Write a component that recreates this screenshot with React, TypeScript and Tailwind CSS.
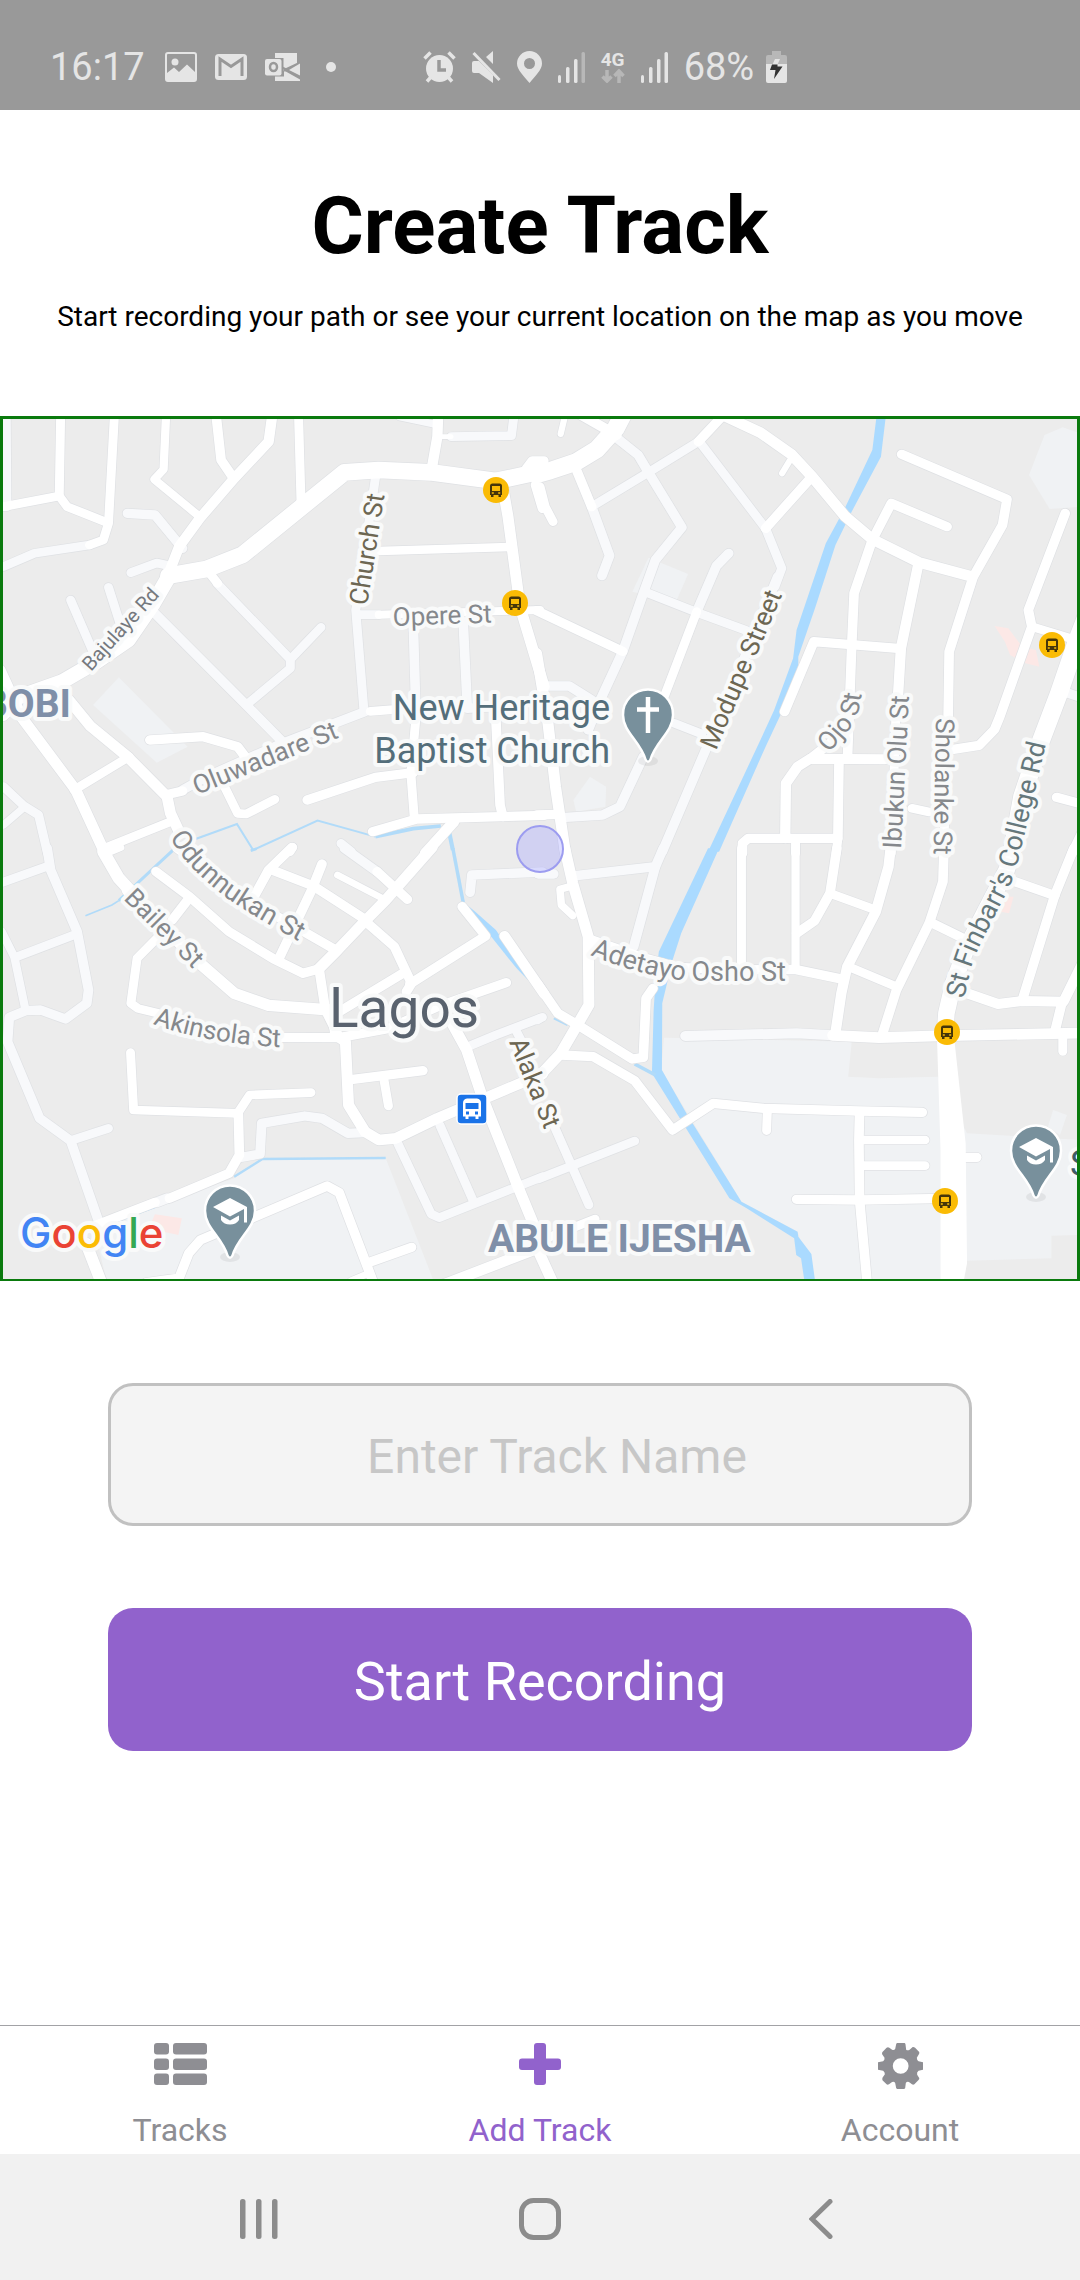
import { Fragment } from "react";
import type { ReactNode } from "react";

type Road = [kind: "w" | "m", width: number, d: string];
type Water = [width: number, d: string];

interface Sheet {
  x: number;
  y: number;
  areas: string[];
  pink: string[];
  rivers: string[];
  streams: Water[];
  roads: Road[];
  blocks: string[];
}

// Each sheet covers a 540 x 440 part of the map, drawn in 1568 x 1320 units.
const SHEETS: Sheet[] = [
  {
    x: 0,
    y: 410,
    areas: ["M345 802L545 1010L455 1058L270 885Z"],
    pink: [],
    rivers: [],
    streams: [
      [6, "M510 1320L560 1290L688 1242L735 1320L922 1232L1090 1280"],
      [11, "M1090 1280L1200 1256L1280 1248"],
      [12, "M1303 1260L1315 1320"],
    ],
    blocks: [],
    roads: [
      ["m", 26, "M18 20L20 290"],
      ["m", 26, "M10 470L100 430L260 405"],
      ["m", 26, "M1310 80L1485 77L1492 20"],
      ["m", 22, "M1160 20L1260 42"],
      ["m", 26, "M1092 190L1065 380L1033 600L1057 905"],
      ["m", 26, "M1040 614L1100 614"],
      ["m", 28, "M370 310L450 315L530 415"],
      ["m", 26, "M380 488L455 459L495 468"],
      ["m", 26, "M205 570L270 725"],
      ["m", 26, "M315 532L350 645"],
      ["m", 26, "M630 520L843 748L843 775L715 885"],
      ["m", 26, "M843 748L932 652"],
      ["m", 28, "M435 595L715 885L820 995"],
      ["m", 28, "M1200 640L1208 920"],
      ["m", 28, "M1345 635L1357 895L1430 890"],
      ["m", 28, "M1060 905L820 1000L600 1100L530 1140"],
      ["m", 26, "M10 1130L70 1188L112 1215L138 1330"],
      ["m", 22, "M10 1245L70 1192"],
      ["m", 26, "M990 1300L1020 1325"],
      ["w", 26, "M260 405L300 390L315 340L332 20"],
      ["w", 26, "M10 290L172 258L176 20"],
      ["w", 26, "M172 258L195 290L305 335"],
      ["w", 24, "M482 20L475 178L448 208L582 322"],
      ["w", 28, "M628 20L642 150L675 200"],
      ["w", 30, "M790 20L780 95L680 205L580 325L520 410L490 490"],
      ["w", 26, "M867 20L874 275"],
      ["w", 50, "M490 497L600 477L705 434L1000 187L1100 180L1250 187L1440 213L1580 182"],
      ["w", 30, "M1272 20L1270 80L1253 180"],
      ["w", 14, "M1280 80L1310 80"],
      ["w", 26, "M1100 423L1480 411"],
      ["w", 44, "M490 500L445 580L372 690L280 755L180 815L30 870"],
      ["w", 26, "M605 485L632 520"],
      ["w", 24, "M1100 614L1568 600"],
      ["w", 32, "M1458 220L1475 320L1510 590L1580 830"],
      ["w", 26, "M1075 904L1150 898"],
      ["w", 26, "M1208 920L1193 1090L1203 1225"],
      ["w", 28, "M1440 930L1452 1185L1460 1220"],
      ["w", 28, "M1580 1216L1210 1227L1082 1265"],
      ["w", 28, "M892 1170L1090 1102L1200 1088"],
      ["w", 28, "M435 990L590 980L690 1010L730 1065"],
      ["w", 26, "M640 1105L690 1210L715 1212L798 1168"],
      ["w", 32, "M200 870L262 948L370 1040L485 1160L495 1210L520 1265"],
      ["w", 28, "M480 1155L530 1143"],
      ["w", 26, "M375 1040L215 1140"],
      ["w", 32, "M0 780L40 870L65 925L220 1140L305 1330"],
      ["w", 26, "M310 1312L495 1235"],
      ["w", 26, "M10 920L50 880"],
      ["w", 26, "M1528 175L1545 152L1580 152"],
      ["w", 28, "M1555 225L1575 295"],
      ["w", 32, "M1318 1235L1235 1330"],
      ["w", 26, "M850 1312L842 1325"],
    ],
  },
  {
    x: 540,
    y: 410,
    areas: [
      "M1518 52L1568 70V290L1480 297L1420 195L1465 75Z",
      "M315 443L430 492L395 575L268 545Z",
      "M145 1100L192 1130L190 1190L105 1205L97 1170Z",
    ],
    pink: ["M1320 648L1360 655L1400 710L1440 720L1450 770L1410 760L1365 735L1350 695Z"],
    rivers: [
      "M977 20L965 120L885 295L830 400L745 660L735 745L680 900L640 990L488 1325H520L655 1010L705 900L750 775V740L800 590L858 405L905 305L990 140L1004 20Z",
    ],
    streams: [],
    blocks: [],
    roads: [
      ["m", 28, "M228 88L285 135L315 187L412 352L335 450L300 550L240 725L175 870L140 960"],
      ["m", 26, "M150 290L315 187L460 95"],
      ["m", 28, "M150 290L202 437L180 497"],
      ["m", 26, "M468 102L655 355L702 475L682 530"],
      ["m", 28, "M690 500L595 740L485 1010L355 1325"],
      ["m", 28, "M548 430L512 468L455 605"],
      ["m", 26, "M315 550L455 607L600 662"],
      ["m", 26, "M390 940L470 972"],
      ["m", 28, "M20 828L85 828L150 870"],
      ["m", 28, "M300 1040L232 1190L182 1215L75 1222"],
      ["m", 28, "M1535 850L1575 864"],
      ["w", 52, "M-12 194L30 182L105 156L165 118L220 55L245 5"],
      ["w", 30, "M120 15L222 75"],
      ["w", 18, "M72 20L60 72"],
      ["w", 28, "M460 95L528 20"],
      ["w", 28, "M108 185L150 290"],
      ["w", 32, "M530 15L640 68L730 133L790 200L885 318L965 388L1100 457L1255 500"],
      ["w", 18, "M725 152L703 190"],
      ["w", 28, "M655 355L785 205"],
      ["w", 26, "M0 230L15 290L38 335"],
      ["w", 26, "M455 605L355 875"],
      ["w", 28, "M-10 602L240 724"],
      ["w", 32, "M-10 730L22 930L45 1130L74 1330"],
      ["w", 28, "M-10 1215L50 1213"],
      ["w", 28, "M1050 133L1356 268L1343 345L1258 500L1188 725L1185 930"],
      ["w", 28, "M1182 350L1020 280L965 390L912 550L905 710L900 850L893 1040"],
      ["w", 30, "M1098 465L1048 715L1040 850"],
      ["w", 28, "M710 905L795 695L1048 716"],
      ["w", 28, "M1525 310L1418 600L1428 650L1335 920L1320 958L1275 1006L1200 1018"],
      ["w", 26, "M1428 650L1540 685"],
      ["w", 52, "M1590 610L1560 690L1507 850L1452 1000L1400 1160L1370 1330"],
      ["w", 28, "M1500 1162L1580 1184"],
      ["w", 28, "M1580 1255L1545 1330"],
      ["w", 30, "M1000 1048L785 1046L748 1070L714 1120L712 1285"],
      ["w", 28, "M860 985L785 1046"],
      ["w", 28, "M868 1060L865 1285L605 1285L588 1300V1330"],
      ["w", 26, "M865 1285L860 1330"],
      ["w", 26, "M742 1285V1330"],
      ["w", 26, "M1080 1195L1130 1206"],
      ["w", 26, "M1035 870L1020 1330"],
      ["w", 26, "M1183 940L1172 1330"],
    ],
  },
  {
    x: 0,
    y: 850,
    areas: ["M760 925H1120L1260 1295H310L270 1120L440 1070L680 985Z"],
    pink: ["M450 1093L528 1105L518 1155L475 1145L440 1115Z"],
    rivers: ["M1345 155L1380 185L1440 240L1500 330L1575 435L1500 355L1430 265Z"],
    streams: [
      [9, "M508 -5L440 60L345 152"],
      [5, "M345 152L325 165L248 197"],
      [7, "M680 980L762 927L1120 924"],
      [6, "M300 1130L415 1085L520 1045"],
      [10, "M1315 -5L1345 157"],
      [8, "M728 2L745 -4"],
    ],
    blocks: [],
    roads: [
      ["m", 28, "M137 -5L147 60L224 245L257 420L252 460L190 507L118 480L75 482L27 502L22 575L115 805L205 872L290 1125"],
      ["m", 26, "M5 98L140 48"],
      ["m", 26, "M45 322L220 253"],
      ["m", 24, "M5 245L42 322L74 480"],
      ["m", 26, "M205 872L315 835"],
      ["m", 26, "M1365 587L1440 555L1575 502"],
      ["m", 26, "M1500 545L1515 575"],
      ["m", 28, "M1000 -5L1095 65"],
      ["m", 28, "M1365 127L1370 75L1575 66"],
      ["m", 30, "M485 1045L455 1057"],
      ["m", 28, "M700 922L755 912L760 820L885 798L935 805L1010 850L1055 848"],
      ["m", 26, "M1155 880L1252 1092L1275 1103L1575 980"],
      ["m", 26, "M1277 825L1375 1055"],
      ["w", 36, "M300 5L345 85L385 130"],
      ["w", 22, "M320 5L350 -8"],
      ["w", 34, "M370 120L580 340L680 430L780 466L960 480"],
      ["w", 28, "M453 65L550 140L665 245L795 327L880 370L925 357"],
      ["w", 28, "M545 150L500 210"],
      ["w", 26, "M465 255L398 325L380 460L400 475L460 490"],
      ["w", 32, "M925 357L980 300L1060 213L1120 150L1255 -8"],
      ["w", 28, "M927 360L945 480L985 562"],
      ["w", 32, "M965 480L975 555L1003 575L1012 765L1060 845L1100 870L1150 865L1270 805L1575 672"],
      ["w", 28, "M740 562L985 563L1130 535L1270 470L1470 398"],
      ["w", 28, "M985 485L1170 370"],
      ["w", 28, "M1060 213L1145 290L1195 400L1180 425"],
      ["w", 28, "M1190 402L1410 258L1342 170"],
      ["w", 32, "M1310 515L1355 600L1400 740L1500 1000L1580 1200"],
      ["w", 28, "M515 -5L720 150L865 235L975 300"],
      ["w", 28, "M848 -8L780 60L735 145"],
      ["w", 28, "M785 58L910 108L1060 208"],
      ["w", 28, "M935 42L905 120L808 330"],
      ["w", 28, "M1095 65L1183 148"],
      ["w", 20, "M980 75L1105 142"],
      ["w", 30, "M1465 258L1580 432"],
      ["w", 26, "M379 608L388 780L690 790L725 735L903 728"],
      ["w", 28, "M692 790L695 915L665 970L492 1045"],
      ["w", 28, "M450 1057L280 1125"],
      ["w", 28, "M1025 688L1228 662"],
      ["w", 26, "M1115 690L1128 768"],
      ["w", 34, "M250 1180L295 1300"],
      ["w", 28, "M425 1298L520 1284L548 1210L582 1170L950 1008L985 1028L1085 1300"],
      ["w", 28, "M1070 1238L1195 1192"],
      ["w", 20, "M1020 1292L1075 1268"],
      ["w", 32, "M1285 1305L1575 1190"],
    ],
  },
  {
    x: 540,
    y: 850,
    areas: [
      "M360 563L905 575L895 680L985 685L1155 680L1240 850L1568 870V1155L1485 1157V1225L1240 1232L1165 1295H798L748 1145L585 1055L352 660Z",
      "M1490 780L1530 795L1510 855L1475 830Z",
    ],
    pink: ["M1348 140L1375 140L1362 190L1338 185Z"],
    rivers: [
      "M488 -5L345 305L335 400L330 480L325 670L550 1045L600 1075L738 1165L744 1215L758 1225L768 1295H799L788 1212L750 1160L748 1145L585 1055L425 790L354 660L355 460L385 330L410 250L520 -5Z",
    ],
    streams: [
      [11, "M275 642L335 675"],
      [6, "M40 505L80 525"],
    ],
    blocks: ["M1152 540L1200 540L1236 880L1240 1240L1230 1295H1163V900Z"],
    roads: [
      ["m", 28, "M-5 72H40"],
      ["m", 28, "M95 78L335 50"],
      ["m", 28, "M358 -5L335 50L272 290"],
      ["m", 30, "M422 558L745 550L850 556"],
      ["m", 26, "M25 790L142 1065"],
      ["m", 26, "M-5 987L275 873"],
      ["m", 26, "M-8 510L0 505"],
      ["w", 32, "M72 -5L95 100L140 260L142 465L60 610L-8 685"],
      ["w", 22, "M85 110L58 118L62 165L95 197"],
      ["w", 28, "M-8 400L52 490L110 525L268 627L300 622L308 445L328 415"],
      ["w", 28, "M60 615L155 620L275 692L385 840L503 760L650 775L925 783L1110 787"],
      ["w", 26, "M30 1160L160 1107"],
      ["w", 32, "M-15 1180L38 1300"],
      ["w", 26, "M585 -5L585 345"],
      ["w", 24, "M742 -5V350"],
      ["w", 28, "M150 270L290 320L400 352L570 360L740 358L880 388"],
      ["w", 28, "M862 -5L842 130L797 213L745 250"],
      ["w", 26, "M842 130L970 178"],
      ["w", 30, "M1018 -5L1012 50L975 185L892 350L875 430L857 555"],
      ["w", 26, "M900 352L1035 410"],
      ["w", 32, "M850 556L985 563L1180 557L1580 549"],
      ["w", 28, "M1173 -5L1170 95L1130 220L1035 420L992 560"],
      ["w", 28, "M1140 220L1235 268"],
      ["w", 48, "M1375 -5L1355 60L1240 290L1200 400L1180 490L1176 550"],
      ["w", 28, "M1365 90L1495 137"],
      ["w", 28, "M1550 -5L1495 135L1402 445"],
      ["w", 30, "M1240 430L1330 462L1400 453L1520 455L1580 330"],
      ["w", 28, "M1515 460L1495 545"],
      ["w", 26, "M1518 560L1518 604"],
      ["w", 28, "M928 785L926 870L928 1050L950 1300"],
      ["w", 26, "M930 870H1118"],
      ["w", 26, "M930 947H1118"],
      ["w", 28, "M745 1048L928 1050L1175 1045"],
      ["w", 26, "M660 785L658 842"],
      ["w", 28, "M1220 922H1268"],
    ],
  },
];

function SheetLayer({ draw }: { draw: (s: Sheet) => ReactNode }) {
  return (
    <>
      {SHEETS.map((s, i) => (
        <g key={i} transform={`translate(${s.x} ${s.y}) scale(0.34439 0.33333)`}>
          {draw(s)}
        </g>
      ))}
    </>
  );
}

function BusStop({ x, y }: { x: number; y: number }) {
  return (
    <g transform={`translate(${x} ${y})`}>
      <circle r="13" fill="#fabb05" />
      <path
        fillRule="evenodd"
        fill="#45350a"
        d="M-3.500-6.500H3.500Q6-6.500 6-4V5H5V7H2.500V5H-2.500V7H-5V5H-6V-4Q-6-6.500-3.500-6.500ZM-4-4V1H4V-4ZM-4.200 2.200V3.800H-2.200V2.200ZM2.200 2.200V3.800H4.200V2.200Z"
      />
    </g>
  );
}

function Pin({ x, y, children }: { x: number; y: number; children: ReactNode }) {
  return (
    <g transform={`translate(${x} ${y})`}>
      <ellipse cy="46" rx="10" ry="5" fill="#000" opacity="0.06" />
      <path
        d="M0-25.500A25 25 0 0 1 25 0C25 17 8 26 2.500 44.500Q0 49-2.500 44.500C-8 26-25 17-25 0A25 25 0 0 1 0-25.500Z"
        fill="#78909c"
        stroke="#fff"
        strokeWidth="2.500"
      />
      {children}
    </g>
  );
}

function SchoolPin({ x, y }: { x: number; y: number }) {
  return (
    <Pin x={x} y={y}>
      <path
        fill="#fff"
        d="M0-13L17-4V11.500H14V-2L0 5.500L-17-4ZM-9 4.500L0 9.500L9 4.500V9Q6 13.500 0 13.500T-9 9Z"
      />
    </Pin>
  );
}

const STRAIGHT: [text: string, x: number, y: number, angle: number, size: string, color: string][] = [
  ["Church St", 367, 606, -81, "text-[26px]", "#6d6753"],
  ["Opere St", 393, 626, -2, "text-[26px]", "#85888c"],
  ["Bajulaye Rd", 91, 672, -48, "text-[20px]", "#75797e"],
  ["Oluwadare St", 197, 795, -22, "text-[26px]", "#85888c"],
  ["Modupe Street", 716, 751, -67, "text-[26px]", "#6d6753"],
  ["Ibukun Olu St", 901, 849, -87, "text-[26px]", "#85888c"],
  ["Sholanke St", 936, 718, 91, "text-[26px]", "#85888c"],
  ["Bailey St", 123, 899, 45, "text-[26px]", "#85888c"],
  ["Alaka St", 509, 1042, 68, "text-[26px]", "#6d6753"],
];

const CURVED: [id: string, text: string, d: string, size: string, color: string][] = [
  ["ojo", "Ojo St", "M829 753L848 731Q860 717 862 690L864 650", "text-[26px]", "#85888c"],
  [
    "finbarr",
    "St Finbarr's College Rd",
    "M964 999L970 973Q973 958 985 935L1008 890Q1016 873 1022 845L1036 787L1052 718",
    "text-[27px]",
    "#65777b",
  ],
  ["odunnukan", "Odunnukan St", "M170 837Q183 864 224 896Q255 918 315 950", "text-[27px]", "#85888c"],
  ["akinsola", "Akinsola St", "M153 1024Q215 1047 310 1048", "text-[26px]", "#85888c"],
  ["adetayo", "Adetayo Osho St", "M590 955Q640 976 690 981H830", "text-[27px]", "#85888c"],
];

function CurvedLabels() {
  return (
    <>
      {CURVED.map(([id, t, d, size, color]) => (
        <Fragment key={id}>
          <path id={id} d={d} fill="none" stroke="none" />
          <text className={size} aria-hidden="true">
            <textPath href={`#${id}`} fill="#f9fafa">
              {t}
            </textPath>
          </text>
          <text className={size} fill={color} stroke="none">
            <textPath href={`#${id}`}>{t}</textPath>
          </text>
        </Fragment>
      ))}
    </>
  );
}

function TrackMap() {
  return (
    <div className="border-[3px] border-b-2 border-[#0a7a0d]">
      <svg
        viewBox="3 419 1074 860"
        className="block h-auto w-full bg-[#ececec] font-['Roboto',sans-serif]"
        role="img"
        aria-label="Map of Lagos around New Heritage Baptist Church"
      >
        <SheetLayer
          draw={(s) => (
            <>
              {s.areas.map((d) => (
                <path key={d} d={d} fill="#f0f2f4" />
              ))}
              {s.pink.map((d) => (
                <path key={d} d={d} fill="#fce8e6" />
              ))}
            </>
          )}
        />
        <SheetLayer
          draw={(s) => (
            <>
              {s.rivers.map((d) => (
                <path key={d} d={d} fill="#aadaff" />
              ))}
              {s.streams.map(([w, d]) => (
                <path key={d} d={d} fill="none" stroke="#b1dbf9" strokeWidth={w} />
              ))}
            </>
          )}
        />
        <g fill="none" strokeLinecap="round" strokeLinejoin="round" stroke="#dfe1e4">
          <SheetLayer
            draw={(s) => s.roads.map(([, w, d]) => <path key={d} d={d} strokeWidth={w + 4} />)}
          />
        </g>
        <g fill="none" strokeLinecap="round" strokeLinejoin="round" stroke="#f8f9fb">
          <SheetLayer
            draw={(s) =>
              s.roads.filter((r) => r[0] === "m").map(([, w, d]) => <path key={d} d={d} strokeWidth={w} />)
            }
          />
        </g>
        <g fill="none" strokeLinecap="round" strokeLinejoin="round" stroke="#fff">
          <SheetLayer
            draw={(s) => (
              <>
                {s.blocks.map((d) => (
                  <path key={d} d={d} fill="#fff" stroke="none" />
                ))}
                {s.roads.filter((r) => r[0] === "w").map(([, w, d]) => (
                  <path key={d} d={d} strokeWidth={w} />
                ))}
              </>
            )}
          />
        </g>

        <circle cx="540" cy="849" r="23" fill="#a0a0ff" fillOpacity="0.35" stroke="#9c9cf0" strokeWidth="2" />

        <g stroke="#f9fafa" strokeWidth="8" strokeLinejoin="round" paintOrder="stroke">
          {STRAIGHT.map(([t, x, y, a, size, color]) => (
            <text key={t} transform={`translate(${x} ${y}) rotate(${a})`} className={size} fill={color}>
              {t}
            </text>
          ))}
          <CurvedLabels />
          <text x="610" y="720" textAnchor="end" className="text-[36px]" fill="#546e7a">
            New Heritage
          </text>
          <text x="610" y="763" textAnchor="end" className="text-[36px]" fill="#546e7a">
            Baptist Church
          </text>
          <text x="71" y="717" textAnchor="end" className="text-[39px] font-bold" fill="#7f8fa8">
            BOBI
          </text>
          <text x="488" y="1252" className="text-[39px] font-bold" fill="#7f8fa8">
            ABULE IJESHA
          </text>
          <text x="329" y="1027" className="text-[55px]" fill="#59626e">
            Lagos
          </text>
          <text x="1070" y="1176" className="text-[36px]" fill="#3f5c66">
            S
          </text>
          <text x="20" y="1248" className="font-['Inter',sans-serif] text-[42px] font-medium">
            <tspan fill="#4285f4">G</tspan>
            <tspan fill="#ea4335">o</tspan>
            <tspan fill="#fbbc05">o</tspan>
            <tspan fill="#4285f4">g</tspan>
            <tspan fill="#34a853">l</tspan>
            <tspan fill="#ea4335">e</tspan>
          </text>
        </g>

        <BusStop x={496} y={490} />
        <BusStop x={515} y={603} />
        <BusStop x={1052} y={645} />
        <BusStop x={947} y={1032} />
        <BusStop x={945} y={1201} />

        <g transform="translate(472 1109)">
          <rect x="-15" y="-15" width="30" height="30" rx="4" fill="#1a73e8" stroke="#fff" strokeWidth="1.500" />
          <path
            fillRule="evenodd"
            fill="#fff"
            d="M-5-10.500H5Q9-10 9-6V7.500H6.500V10H3.500V7.500H-3.500V10H-6.500V7.500H-9V-6Q-9-10-5-10.500ZM-6.500-6V0H6.500V-6ZM-6 2.500V5.500H-3V2.500ZM3 2.500V5.500H6V2.500Z"
          />
        </g>

        <Pin x={648} y={715}>
          <path d="M0-18V18M-11-5.500H11" stroke="#fff" strokeWidth="4.500" />
        </Pin>
        <SchoolPin x={230} y={1211} />
        <SchoolPin x={1036} y={1151} />
      </svg>
    </div>
  );
}

function Signal({ weak = false }: { weak?: boolean }) {
  return (
    <svg viewBox="0 0 27 31" className="h-[31px] w-[27px] fill-current" aria-hidden="true">
      <rect y="23" width="3" height="8" rx="1.500" />
      <rect x="8" y="15" width="3.500" height="16" rx="1.500" />
      <rect x="16" y="7" width="3.500" height="24" rx="1.500" />
      <rect x="23.500" width="3.500" height="31" rx="1.500" opacity={weak ? 0.4 : 1} />
    </svg>
  );
}

function StatusBar() {
  return (
    <header className="flex h-[110px] items-center bg-[#999] pt-6 pl-[50px] text-[38px] leading-none text-[#e5e5e5]">
      <div className="flex items-center gap-[18px]">
        <time className="mr-0.5">16:17</time>
        <svg viewBox="0 0 32 30" className="h-[30px] w-8" aria-hidden="true">
          <rect x="1" y="1" width="30" height="28" rx="2" fill="none" stroke="currentColor" strokeWidth="2" />
          <circle cx="10" cy="10" r="3.500" fill="currentColor" />
          <path d="M2 21L9 15.500L14 20L22 12.500L30 20V28H2Z" fill="currentColor" />
        </svg>
        <svg viewBox="0 0 32 26" className="h-[26px] w-8" aria-hidden="true">
          <rect width="32" height="26" rx="3.500" fill="currentColor" />
          <path d="M5 22V5L16 12.500L27 5V22" fill="none" stroke="#999" strokeWidth="3" />
        </svg>
        <svg viewBox="0 0 35 28" className="h-7 w-[35px]" aria-hidden="true">
          <path d="M10 0H32V13L18.500 17.500V5H10ZM19 17.500L35 26.500V28H10V23.500H19Z" fill="currentColor" />
          <path d="M17 14.500L35 23.500M19 17.500L35 10" stroke="#999" strokeWidth="2.500" />
          <path d="M35 10.500V22.500L24 17Z" fill="currentColor" />
          <rect y="6" width="16.500" height="16.500" rx="2" fill="currentColor" />
          <ellipse cx="8.500" cy="14" rx="3.500" ry="4" fill="none" stroke="#999" strokeWidth="2.500" />
        </svg>
        <span className="ml-2 size-[10px] rounded-full bg-current" />
      </div>
      <div className="ml-[87px] flex items-center gap-4">
        <svg viewBox="0 0 33 32" className="h-8 w-[33px]" aria-hidden="true">
          <circle cx="16.500" cy="17.500" r="13.500" fill="currentColor" />
          <path
            d="M1.500 7.500L7.500 1.500M31.500 7.500L25.500 1.500M4 30.500L8 26M29 30.500L25 26"
            stroke="currentColor"
            strokeWidth="3.500"
          />
          <path d="M16 9V19H23" fill="none" stroke="#999" strokeWidth="3.500" />
        </svg>
        <svg viewBox="0 0 29 32" className="h-8 w-[29px]" aria-hidden="true">
          <path d="M21 0V13L14 6ZM0 12Q0 10 2 10H7L21 24V32L7 22H2Q0 22 0 20Z" fill="currentColor" />
          <path d="M3 0L29 27" stroke="#999" strokeWidth="3" />
          <path d="M1.500 2L27.500 29" stroke="currentColor" strokeWidth="3" />
        </svg>
        <svg viewBox="0 0 25 32" className="h-8 w-[25px] fill-current" aria-hidden="true">
          <path
            fillRule="evenodd"
            d="M12.500 0A12.500 12.500 0 0 1 25 12.500C25 19 18 25 12.500 32C7 25 0 19 0 12.500A12.500 12.500 0 0 1 12.500 0ZM12.500 7A5.500 5.500 0 1 0 12.500 18A5.500 5.500 0 1 0 12.500 7Z"
          />
        </svg>
        <Signal weak />
        <div className="flex flex-col items-center">
          <span className="text-[19px] leading-[18px] font-bold">4G</span>
          <svg viewBox="0 0 24 14" className="h-[14px] w-6 opacity-40" aria-hidden="true">
            <path
              d="M6 1V12M1.500 7.500L6 12L10.500 7.500M18 14V3M13.500 7L18 2L22.500 7"
              fill="none"
              stroke="currentColor"
              strokeWidth="3.500"
            />
          </svg>
        </div>
        <Signal />
        <div className="flex items-center gap-3">
          <span>68%</span>
          <svg viewBox="0 0 21 32" className="h-8 w-[21px]" aria-hidden="true">
            <path d="M6 0H15V4H19Q21 4 21 6V14H0V6Q0 4 2 4H6Z" fill="currentColor" opacity="0.4" />
            <path d="M0 13H21V30Q21 32 19 32H2Q0 32 0 30Z" fill="currentColor" />
            <path d="M9 8H14L11.500 13.500H6.500Z" fill="currentColor" />
            <path d="M6 13.500H11.500V15.500H16.500L8 28L9.500 19H4Z" fill="#333" />
          </svg>
        </div>
      </div>
    </header>
  );
}

function TabLink({ label, active = false, children }: { label: string; active?: boolean; children: ReactNode }) {
  return (
    <a
      href="#"
      aria-current={active ? "page" : undefined}
      className={`flex flex-1 flex-col items-center justify-between pt-[17px] pb-[6px] ${active ? "text-[#9162cc]" : "text-[#8e8e93]"}`}
    >
      {children}
      <span className="text-[32px] leading-9">{label}</span>
    </a>
  );
}

function TabBar() {
  return (
    <nav className="flex h-[129px] border-t border-[#a2a2a6]">
      <TabLink label="Tracks">
        <svg viewBox="0 0 53 42" className="h-[42px] w-[53px] fill-current" aria-hidden="true">
          {[0, 15.5, 30.5].map((y) => (
            <Fragment key={y}>
              <rect y={y} width="15" height="11.500" rx="3" />
              <rect x="19" y={y} width="34" height="11.500" rx="3" />
            </Fragment>
          ))}
        </svg>
      </TabLink>
      <TabLink label="Add Track" active>
        <svg viewBox="0 0 42 42" className="size-[42px] fill-current" aria-hidden="true">
          <rect x="15" width="12" height="42" rx="3" />
          <rect y="15.500" width="42" height="11.500" rx="3" />
        </svg>
      </TabLink>
      <TabLink label="Account">
        <svg viewBox="0 0 131 138" className="h-[46px] w-[45px] fill-current" preserveAspectRatio="none" aria-hidden="true">
          <path
            fillRule="evenodd"
            d="M55 0H77Q79 0 80 4L82 20Q86 24 92 20L101 12Q104 11 108 14L120 27Q121 31 119 34L113 44Q113 52 118 55L131 58V80L118 83Q112 88 114 95L120 105Q121 108 118 111L106 124Q102 126 99 124L90 117Q84 115 81 120L79 136L76 138H56L53 136L50 120Q47 114 41 117L32 124Q28 126 25 124L13 112Q12 108 13 104L20 94Q20 86 15 83L0 80V58L15 55Q20 50 19 44L12 34Q11 30 13 27L25 14Q29 11 33 14L41 20Q47 22 50 18L53 3ZM66 46A23 23 0 1 0 66 92A23 23 0 1 0 66 46Z"
          />
        </svg>
      </TabLink>
    </nav>
  );
}

function SystemNav() {
  return (
    <footer className="bg-[#f1f1f1] text-[#8c8c8c]">
      <div className="mx-auto grid h-[126px] w-[78%] grid-cols-3 place-items-center pt-1">
        <button type="button" aria-label="Recent apps">
          <svg viewBox="0 0 38 40" className="block h-10 w-[38px] fill-current">
            <rect width="5.500" height="40" rx="2.500" />
            <rect x="16" width="5.500" height="40" rx="2.500" />
            <rect x="32" width="5.500" height="40" rx="2.500" />
          </svg>
        </button>
        <button type="button" aria-label="Home">
          <svg viewBox="0 0 42 42" className="block size-[42px]">
            <rect x="2.500" y="2.500" width="37" height="37" rx="12" fill="none" stroke="currentColor" strokeWidth="5" />
          </svg>
        </button>
        <button type="button" aria-label="Back">
          <svg viewBox="0 0 24 40" className="block h-10 w-6">
            <path d="M21 2.500L3 20L21 37.500" fill="none" stroke="currentColor" strokeWidth="5" strokeLinecap="round" />
          </svg>
        </button>
      </div>
    </footer>
  );
}

export default function App() {
  return (
    <div className="flex min-h-screen flex-col bg-white font-['Roboto',sans-serif] text-black">
      <StatusBar />
      <main className="flex flex-1 flex-col">
        <h1 className="mt-[69px] text-center text-[80px] leading-[94px] font-bold">Create Track</h1>
        <p className="mt-6 mb-20 text-center text-[28px] leading-[39px]">
          Start recording your path or see your current location on the map as you move
        </p>
        <TrackMap />
        <form className="mx-auto mt-[102px] flex w-4/5 flex-col gap-[82px]" onSubmit={(e) => e.preventDefault()}>
          <input
            type="text"
            aria-label="Track name"
            placeholder="Enter Track Name"
            className="h-[143px] w-full rounded-[25px] border-[3px] border-[#c1c1c1] bg-[#f4f4f4] pt-1 pl-[34px] text-center text-[48px] outline-none placeholder:text-[#c7c7c7]"
          />
          <button type="submit" className="h-[143px] w-full rounded-[25px] bg-[#9162cc] pt-1 text-[54px] text-white">
            Start Recording
          </button>
        </form>
      </main>
      <TabBar />
      <SystemNav />
    </div>
  );
}
